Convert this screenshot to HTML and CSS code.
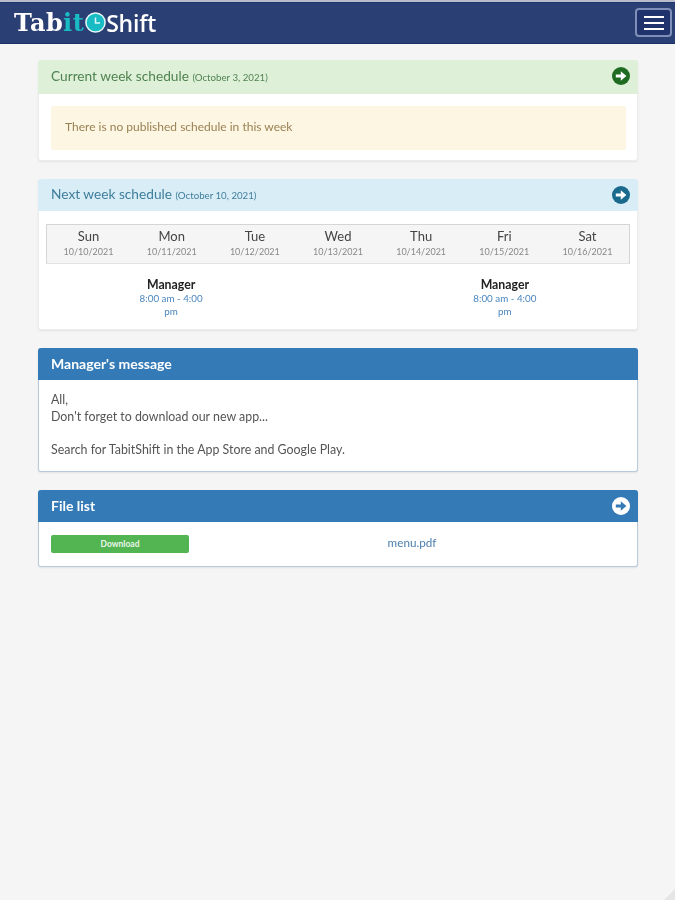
FILE: index.html
```html
<!DOCTYPE html>
<html lang="en">
<head>
<meta charset="utf-8">
<title>TabitShift</title>
<link rel="stylesheet" href="styles.css">
</head>
<body>
<header class="navbar">
  <div class="logo">
    <span class="logo-tab">Tab</span><span class="logo-it">it</span>
    <svg class="logo-clock" width="21" height="21" viewBox="0 0 21 21"><circle cx="10.5" cy="10.5" r="9.6" fill="#19bcc4" stroke="#e6f7f8" stroke-width="1.5"/><path d="M10.5 5.5v5.5h4.5" fill="none" stroke="#dff6f7" stroke-width="1.5"/></svg>
    <span class="logo-shift">Shift</span>
  </div>
  <button class="toggle" aria-label="Menu"><span></span><span></span><span></span></button>
</header>
<main class="content">
  <section class="panel panel-success">
    <div class="panel-head">
      <h2 class="panel-title">Current week schedule <small>(October 3, 2021)</small></h2>
      <svg class="go" width="18" height="18" viewBox="0 0 18 18"><circle cx="9" cy="9" r="9" fill="#1f6b22"/><path d="M3.8 7.4h5V4.2L14.4 9l-5.6 4.8v-3.2h-5z" fill="#fff"/></svg>
    </div>
    <div class="panel-body">
      <div class="alert">There is no published schedule in this week</div>
    </div>
  </section>
  <section class="panel panel-info">
    <div class="panel-head panel-head-short">
      <h2 class="panel-title">Next week schedule <small>(October 10, 2021)</small></h2>
      <svg class="go" width="18" height="18" viewBox="0 0 18 18"><circle cx="9" cy="9" r="9" fill="#1a6a8e"/><path d="M3.8 7.4h5V4.2L14.4 9l-5.6 4.8v-3.2h-5z" fill="#fff"/></svg>
    </div>
    <div class="week">
      <div class="days">
        <div class="day"><b>Sun</b><span>10/10/2021</span></div>
        <div class="day"><b>Mon</b><span>10/11/2021</span></div>
        <div class="day"><b>Tue</b><span>10/12/2021</span></div>
        <div class="day"><b>Wed</b><span>10/13/2021</span></div>
        <div class="day"><b>Thu</b><span>10/14/2021</span></div>
        <div class="day"><b>Fri</b><span>10/15/2021</span></div>
        <div class="day"><b>Sat</b><span>10/16/2021</span></div>
      </div>
      <div class="shifts">
        <div class="shift"></div>
        <div class="shift"><b>Manager</b><a href="#">8:00 am - 4:00 pm</a></div>
        <div class="shift"></div>
        <div class="shift"></div>
        <div class="shift"></div>
        <div class="shift"><b>Manager</b><a href="#">8:00 am - 4:00 pm</a></div>
        <div class="shift"></div>
      </div>
    </div>
  </section>
  <section class="panel panel-primary">
    <div class="panel-head panel-head-short">
      <h2 class="panel-title">Manager's message</h2>
    </div>
    <div class="message">All,<br>Don't forget to download our new app...<br><br>Search for TabitShift in the App Store and Google Play.</div>
  </section>
  <section class="panel panel-primary">
    <div class="panel-head panel-head-short">
      <h2 class="panel-title">File list</h2>
      <svg class="go" width="18" height="18" viewBox="0 0 18 18"><circle cx="9" cy="9" r="9" fill="#fff"/><path d="M3.8 7.4h5V4.2L14.4 9l-5.6 4.8v-3.2h-5z" fill="#337ab7"/></svg>
    </div>
    <div class="files">
      <a class="download" href="#">Download</a>
      <a class="file" href="#">menu.pdf</a>
    </div>
  </section>
</main>
<div class="corner"></div>
</body>
</html>
```
FILE: styles.css
```css
* { box-sizing: border-box; }
html, body { height: 100%; }
body {
  margin: 0;
  height: 900px;
  overflow: hidden;
  background: #f5f5f5;
  color: #333;
  font-family: "Lato", "Open Sans", sans-serif;
  font-size: 12px;
  position: relative;
}
.navbar {
  height: 44px;
  background: #2a3f73;
  border-top: 2px solid #b9bdc7;
  border-bottom: 1px solid #1c3068;
  display: flex;
  align-items: center;
  justify-content: space-between;
  padding: 0 3px 0 14px;
  box-shadow: inset 0 1px 0 #1f3570;
}
.logo {
  display: flex;
  align-items: center;
  font-weight: 700;
  color: #fff;
  filter: blur(0.4px);
}
.logo-tab, .logo-it {
  font-family: "DejaVu Serif", serif;
  font-size: 24px;
  letter-spacing: 0.4px;
}
.logo-it { color: #19bcc4; }
.logo-clock { margin-left: 1px; }
.logo-shift {
  font-family: "Open Sans", sans-serif;
  font-size: 23px;
  font-weight: 600;
  letter-spacing: -0.2px;
}
.toggle {
  width: 37px;
  height: 29px;
  padding: 0;
  background: #20336d;
  border: 2px solid #7f8fb8;
  border-radius: 4px;
  display: flex;
  flex-direction: column;
  justify-content: center;
  align-items: center;
  gap: 4px;
}
.toggle span {
  width: 20px;
  height: 2px;
  background: #fff;
}
.content {
  padding: 16px 37px 0 38px;
  display: flex;
  flex-direction: column;
  gap: 18px;
}
.panel {
  background: #fff;
  border-radius: 3px;
  box-shadow: 0 1px 2px rgba(0,0,0,.08);
  border: 1px solid #eceeee;
  border-top: 0;
}
.panel-head {
  height: 34px;
  margin: 0 -1px;
  padding: 0 8px 0 13px;
  display: flex;
  align-items: center;
  justify-content: space-between;
  border-radius: 3px 3px 0 0;
}
.panel-head-short { height: 32px; }
.panel-title {
  margin: 0;
  font-size: 13.7px;
  font-weight: 400;
  filter: blur(0.3px);
}
.panel-title small { font-size: 9.7px; }
.panel-success .panel-title, .panel-info .panel-title { padding-bottom: 3px; }
.panel-success .go { margin-bottom: 2px; }
.panel-success .panel-head { background: #dff0d8; color: #4f8250; }
.panel-info .panel-head { background: #d9edf7; color: #3f7d9b; }
.panel-primary { border-color: #b9cadb; }
.panel-primary .panel-head { background: #337ab7; color: #fff; }
.panel-primary .panel-title { font-weight: 700; font-size: 14px; padding-bottom: 1px; }
.panel-body { padding: 12px 11px 10px 12px; }
.alert {
  height: 44px;
  display: flex;
  align-items: center;
  padding: 0 14px 3px;
  background: #fcf6e3;
  color: #9a8254;
  border-radius: 3px;
  font-size: 12px;
  filter: blur(0.3px);
}
.week { padding: 13px 7px 11px 7px; }
.days, .shifts {
  display: grid;
  grid-template-columns: repeat(7, 1fr);
}
.days {
  height: 40px;
  background: #f5f5f5;
  border: 1px solid #d5d5d5;
  border-bottom-color: #e3e3e3;
  text-align: center;
  filter: blur(0.2px);
}
.day { padding-top: 3px; }
.day b {
  display: block;
  font-weight: 400;
  font-size: 13px;
  line-height: 17px;
  color: #444;
}
.day span {
  display: block;
  font-size: 9px;
  line-height: 13px;
  color: #888;
}
.shifts { padding-top: 14px; text-align: center; filter: blur(0.25px); }
.shift { padding: 0 8px; }
.shift b { display: block; font-size: 12.3px; line-height: 14px; color: #222; }
.shift a { display: block; font-size: 9.8px; line-height: 13px; color: #4b86bd; text-decoration: none; }
.message {
  padding: 12px 12px 12px;
  line-height: 16.7px;
  font-size: 12.4px;
  color: #555;
  filter: blur(0.3px);
}
.files {
  height: 44px;
  padding: 0 12px;
  display: grid;
  grid-template-columns: 138px 1fr;
  align-items: center;
  text-align: center;
}
.download {
  height: 18px;
  line-height: 18px;
  background: #52b552;
  border: 0;
  border-radius: 2px;
  color: #eaf6ea;
  font-size: 8.5px;
  font-weight: 700;
  text-decoration: none;
}
.file { color: #4b7fad; text-decoration: none; font-size: 11.7px; margin: 0 0 3px 10px; filter: blur(0.3px); }
.corner {
  position: absolute;
  right: 0;
  bottom: 0;
  width: 11px;
  height: 11px;
  background: #e6e6e6;
  clip-path: polygon(100% 0, 100% 100%, 0 100%);
}
```
